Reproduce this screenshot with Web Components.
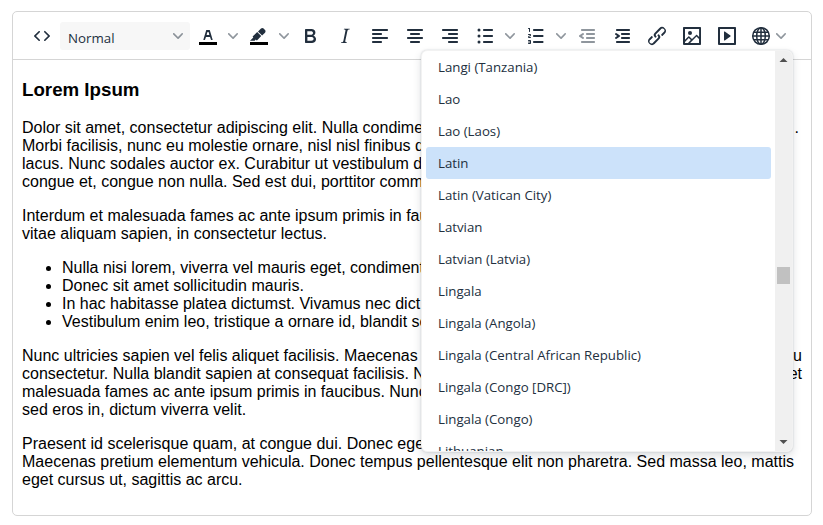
<!DOCTYPE html>
<html lang="en">
<head>
<meta charset="utf-8">
<title>Editor</title>
<style>
html, body { margin: 0; background: #fff; }
body { width: 823px; height: 525px; overflow: hidden; }
</style>
</head>
<body>
<rich-editor></rich-editor>
<script>
const line = (x, y, w) => `<rect x="${x}" y="${y}" width="${w}" height="2" rx=".8"/>`;
const ICONS = {
  code: '<path d="M9.8 15.7c.3.3.3.8 0 1-.3.4-.9.4-1.2 0l-4.4-4.1a.8.8 0 0 1 0-1.2l4.4-4.2c.3-.3.9-.3 1.2 0 .3.3.3.8 0 1.1L6 12l3.8 3.7ZM14.2 15.7c-.3.3-.3.8 0 1 .4.4.9.4 1.2 0l4.4-4.1c.3-.3.3-.9 0-1.2l-4.4-4.2a.8.8 0 0 0-1.2 0c-.3.3-.3.8 0 1.1L18 12l-3.8 3.7Z"/>',
  color: '<path fill="#000" d="M3 18h18v3H3z"/><path fill-rule="evenodd" d="M8.7 16h-.8a.5.5 0 0 1-.5-.6l2.7-9c.1-.3.3-.4.5-.4h2.8c.2 0 .4.1.5.4l2.7 9a.5.5 0 0 1-.5.6h-.8a.5.5 0 0 1-.4-.4l-.7-2.2c0-.3-.3-.4-.5-.4h-3.4c-.2 0-.4.1-.5.4l-.7 2.2c0 .3-.2.4-.4.4Zm2.6-7.6-.6 2a.5.5 0 0 0 .5.6h1.6a.5.5 0 0 0 .5-.6l-.6-2c0-.3-.3-.4-.5-.4h-.4c-.2 0-.4.1-.5.4Z"/>',
  marker: '<path fill="#000" d="M3 18h18v3H3z"/><path d="M7.7 16.7H3l3.3-3.3-.7-.8L10.2 8l4 4.1-4 4.2c-.2.2-.6.2-.8 0l-.6-.7-1.1 1.1zm5-7.5L11 7.4l3-2.9a2 2 0 0 1 2.6 0L18 6c.7.7.7 2 0 2.7l-2.9 2.9-1.8-1.8-.5-.6"/>',
  bold: '<path fill-rule="evenodd" d="M7.8 19c-.3 0-.5 0-.6-.2l-.2-.5V5.7c0-.2 0-.4.2-.5l.6-.2h5c1.5 0 2.7.3 3.5 1 .7.6 1.1 1.4 1.1 2.5a3 3 0 0 1-.6 1.9c-.4.6-1 1-1.6 1.2.4.1.9.3 1.3.6s.8.7 1 1.2c.4.4.5 1 .5 1.6 0 1.3-.4 2.3-1.3 3-.8.7-2.1 1-3.8 1H7.8Zm5-8.3c.6 0 1.2-.1 1.6-.5.4-.3.6-.7.6-1.3 0-1.1-.8-1.7-2.3-1.7H9.3v3.5h3.4Zm.5 6c.7 0 1.3-.1 1.7-.4.4-.4.6-.9.6-1.5s-.2-1-.7-1.4c-.4-.3-1-.4-2-.4H9.4v3.8h4Z"/>',
  italic: '<path d="m16.7 4.7-.1.9h-.3c-.6 0-1 0-1.4.3-.3.3-.4.6-.5 1.1l-2.1 9.8v.6c0 .5.4.8 1.4.8h.2l-.2.8H8l.2-.8h.2c1.1 0 1.8-.5 2-1.5l2-9.8.1-.5c0-.6-.4-.8-1.4-.8h-.3l.2-.9h5.8Z"/>',
  left: line(4,5,16) + line(4,9,10) + line(4,13,16) + line(4,17,10),
  center: line(4,5,16) + line(7,9,10) + line(4,13,16) + line(7,17,10),
  right: line(4,5,16) + line(10,9,10) + line(4,13,16) + line(10,17,10),
  bullets: line(10,5,10) + line(10,11,10) + line(10,17,10) + '<circle cx="6" cy="6" r="1.5"/><circle cx="6" cy="12" r="1.5"/><circle cx="6" cy="18" r="1.5"/>',
  numbers: line(9,5,10.5) + line(9,11,10.5) + line(9,17,10.5) + '<path d="M6 4v3.5c0 .3-.2.5-.5.5a.5.5 0 0 1-.5-.5V5h-.5a.5.5 0 0 1 0-1H6Zm-1 8.8.2.2h1.3c.3 0 .5.2.5.5s-.2.5-.5.5H4.9a1 1 0 0 1-.9-1V13c0-.4.3-.8.6-1l1.2-.4.2-.3a.2.2 0 0 0-.2-.2H4.5a.5.5 0 0 1-.5-.5c0-.3.2-.5.5-.5h1.6c.5 0 .9.4.9 1v.1c0 .4-.3.8-.6 1l-1.2.4-.2.3ZM7 17v2c0 .6-.4 1-1 1H4.5a.5.5 0 0 1 0-1h1.2c.2 0 .3-.1.3-.3 0-.2-.1-.3-.3-.3H4.4a.4.4 0 1 1 0-.8h1.3c.2 0 .3-.1.3-.3 0-.2-.1-.3-.3-.3H4.5a.5.5 0 1 1 0-1H6c.6 0 1 .4 1 1Z"/>',
  outdent: line(6,5,14) + line(11,9,9) + line(11,13,9) + line(6,17,14) + '<path d="M8.6 13.2a1 1 0 0 1-1.2 1.6l-3-2a1 1 0 0 1 0-1.6l3-2a1 1 0 0 1 1.2 1.6L6.8 12l1.8 1.2Z"/>',
  indent: line(6,5,14) + line(11,9,9) + line(11,13,9) + line(6,17,14) + '<path d="M5.4 13.2 7.2 12l-1.8-1.2a1 1 0 0 1 1.2-1.6l3 2a1 1 0 0 1 0 1.6l-3 2a1 1 0 1 1-1.2-1.6Z"/>',
  link: '<path d="M6.2 12.3a1 1 0 0 1 1.4 1.4l-2 2a2 2 0 1 0 2.6 2.8l4.8-4.8a1 1 0 0 0 0-1.4 1 1 0 1 1 1.4-1.3 2.9 2.9 0 0 1 0 4L9.6 20a3.9 3.9 0 0 1-5.5-5.5l2-2Zm11.6-.6a1 1 0 0 1-1.4-1.4l2-2a2 2 0 1 0-2.6-2.8L11 10.3a1 1 0 0 0 0 1.4A1 1 0 1 1 9.6 13a2.9 2.9 0 0 1 0-4L14.4 4a3.9 3.9 0 0 1 5.5 5.5l-2 2Z"/>',
  image: '<path fill-rule="evenodd" d="m5 15.7 3.3-3.2c.3-.3.7-.3 1 0L12 15l4.1-4c.3-.4.8-.4 1 0l2 1.9V5H5v10.7ZM5 18V19h3l2.8-2.9-2-2L5 17.9Zm14-3-2.5-2.4-6.4 6.5H19v-4ZM4 3h16c.6 0 1 .4 1 1v16c0 .6-.4 1-1 1H4a1 1 0 0 1-1-1V4c0-.6.4-1 1-1Z"/><circle cx="10" cy="9" r="2"/>',
  media: '<path fill-rule="evenodd" d="M4 3h16c.6 0 1 .4 1 1v16c0 .6-.4 1-1 1H4a1 1 0 0 1-1-1V4c0-.6.4-1 1-1Zm1 2v14h14V5H5Zm4.8 2.6 5.6 4a.5.5 0 0 1 0 .8l-5.6 4A.5.5 0 0 1 9 16V8a.5.5 0 0 1 .8-.4Z"/>',
  globe: '<g fill="none" stroke="currentColor" stroke-width="1.5"><circle cx="12" cy="12" r="8.3"/><ellipse cx="12" cy="12" rx="4.3" ry="8.3"/><path d="M12 4v16M4 12h16M5 8.2h14M5 15.8h14"/></g>'
};

class ToolIcon extends HTMLElement {
  connectedCallback() {
    this.attachShadow({mode: 'open'}).innerHTML = `<style>
      :host { display: flex; align-items: center; justify-content: center; width: 35px; height: 28px; flex: none; color: #222f3e; }
      :host([name=code]) { width: 34px; padding-right: 1px; }
      :host([menu]) { width: 51px; justify-content: flex-start; box-sizing: border-box; padding-left: 5.5px; }
      :host([globe]) { width: 46px; padding-left: 5px; }
      :host([globe]) .chev { margin-left: 3px; }
      :host([disabled]) .main { opacity: .5; }
      svg { display: block; fill: currentColor; flex: none; }
      .chev { margin-left: 8px; opacity: .5; }
    </style><svg class="main" width="24" height="24" viewBox="0 0 24 24">${ICONS[this.getAttribute('name')]}</svg>${
      this.hasAttribute('menu') ? '<svg class="chev" width="10" height="10" viewBox="0 0 10 10"><path d="M8.7 2.2c.3-.3.8-.3 1 0 .4.4.4.9 0 1.2L5.7 7.8c-.3.3-.9.3-1.2 0L.2 3.4a.8.8 0 0 1 0-1.2c.3-.3.8-.3 1.1 0L5 6l3.7-3.8Z"/></svg>' : ''}`;
  }
}
customElements.define('tool-icon', ToolIcon);

class FormatSelect extends HTMLElement {
  connectedCallback() {
    this.attachShadow({mode: 'open'}).innerHTML = `<style>
      :host { display: flex; align-items: center; justify-content: space-between; box-sizing: border-box; width: 130px; height: 28px; padding: 3px 7px 0 8px; background: #f7f7f7; border-radius: 3px; color: #222f3e; font: 13.3px/24px "Open Sans", sans-serif; flex: none; }
      svg { fill: currentColor; opacity: .5; margin-top: -3px; }
    </style><slot></slot><svg width="10" height="10" viewBox="0 0 10 10"><path d="M8.7 2.2c.3-.3.8-.3 1 0 .4.4.4.9 0 1.2L5.7 7.8c-.3.3-.9.3-1.2 0L.2 3.4a.8.8 0 0 1 0-1.2c.3-.3.8-.3 1.1 0L5 6l3.7-3.8Z"/></svg>`;
  }
}
customElements.define('format-select', FormatSelect);

class EditorToolbar extends HTMLElement {
  connectedCallback() {
    this.attachShadow({mode: 'open'}).innerHTML = `<style>
      :host { display: flex; align-items: center; height: 47px; padding-left: 12px; border-bottom: 1px solid #d5d5d5; }
      .bar { display: flex; align-items: center; height: 28px; padding-top: 1px; }
    </style><div class="bar">
      <tool-icon name="code"></tool-icon><format-select>Normal</format-select>
      <tool-icon name="color" menu></tool-icon><tool-icon name="marker" menu></tool-icon>
      <tool-icon name="bold"></tool-icon><tool-icon name="italic"></tool-icon>
      <tool-icon name="left"></tool-icon><tool-icon name="center"></tool-icon><tool-icon name="right"></tool-icon>
      <tool-icon name="bullets" menu></tool-icon><tool-icon name="numbers" menu></tool-icon>
      <tool-icon name="outdent" disabled></tool-icon><tool-icon name="indent"></tool-icon>
      <tool-icon name="link"></tool-icon><tool-icon name="image"></tool-icon><tool-icon name="media"></tool-icon>
      <tool-icon name="globe" menu globe></tool-icon></div>`;
  }
}
customElements.define('editor-toolbar', EditorToolbar);

class EditorContent extends HTMLElement {
  connectedCallback() {
    this.attachShadow({mode: 'open'}).innerHTML = `<style>
      :host { display: block; padding: 19px 9px 0; font: 16px/18px "Liberation Sans", Arial, sans-serif; color: #000; white-space: nowrap; }
      h3 { font-size: 18.72px; line-height: 22px; margin: 0 0 18px; }
      p, ul { margin: 0 0 16px; }
      ul { padding-left: 40px; }
      .row { display: flex; justify-content: space-between; }
      .a { padding-right: 3px; }
    </style>
    <h3>Lorem Ipsum</h3>
    <p><span class="row a"><span>Dolor sit amet, consectetur adipiscing elit. Nulla condime</span><span>.</span></span>
    Morbi facilisis, nunc eu molestie ornare, nisl nisl finibus d<br>lacus. Nunc sodales auctor ex. Curabitur ut vestibulum d<br>congue et, congue non nulla. Sed est dui, porttitor comm</p>
    <p>Interdum et malesuada fames ac ante ipsum primis in fau<br>vitae aliquam sapien, in consectetur lectus.</p>
    <ul><li>Nulla nisi lorem, viverra vel mauris eget, condiment</li><li>Donec sit amet sollicitudin mauris.</li><li>In hac habitasse platea dictumst. Vivamus nec dict</li><li>Vestibulum enim leo, tristique a ornare id, blandit se</li></ul>
    <p><span class="row"><span>Nunc ultricies sapien vel felis aliquet facilisis. Maecenas</span><span>u</span></span>
    <span class="row"><span>consectetur. Nulla blandit sapien at consequat facilisis. N</span><span>et</span></span>
    malesuada fames ac ante ipsum primis in faucibus. Nunc<br>sed eros in, dictum viverra velit.</p>
    <p>Praesent id scelerisque quam, at congue dui. Donec ege<br>Maecenas pretium elementum vehicula. Donec tempus pellentesque elit non pharetra. Sed massa leo, mattis<br>eget cursus ut, sagittis ac arcu.</p>`;
  }
}
customElements.define('editor-content', EditorContent);

class LangItem extends HTMLElement {
  connectedCallback() {
    this.attachShadow({mode: 'open'}).innerHTML = `<style>
      :host { display: flex; align-items: center; height: 32px; padding-left: 12px; box-sizing: border-box; border-radius: 3px; flex: none; }
      :host([active]) { background: #cce2fa; }
    </style><slot></slot>`;
  }
}
customElements.define('lang-item', LangItem);

class LangMenu extends HTMLElement {
  connectedCallback() {
    const names = ['Langi (Tanzania)', 'Lao', 'Lao (Laos)', 'Latin', 'Latin (Vatican City)', 'Latvian', 'Latvian (Latvia)', 'Lingala', 'Lingala (Angola)', 'Lingala (Central African Republic)', 'Lingala (Congo [DRC])', 'Lingala (Congo)', 'Lithuanian'];
    this.attachShadow({mode: 'open'}).innerHTML = `<style>
      :host { position: absolute; left: 421px; top: 50px; width: 372px; height: 402px; box-sizing: border-box; display: flex; background: #fff; border: 1px solid #f2f2f2; border-radius: 6px; box-shadow: 0 0 2px rgba(34,47,62,.2), 0 4px 8px rgba(34,47,62,.15); overflow: hidden; font: 13.25px/20px "Open Sans", sans-serif; color: #222f3e; white-space: nowrap; }
      .list { display: flex; flex-direction: column; width: 345px; padding: 0 4px; height: 400px; overflow: hidden; }
      .track { width: 17px; height: 400px; background: #f0f0f0; display: flex; flex-direction: column; align-items: center; flex: none; }
      .thumb { width: 13px; height: 17px; background: #c1c1c1; margin-top: 199px; }
      svg { display: block; fill: #505050; width: 17px; height: 17px; }
      .down { margin-top: auto; }
    </style><div class="list">${names.map(n => `<lang-item${n === 'Latin' ? ' active' : ''}>${n}</lang-item>`).join('')}</div>
    <div class="track"><svg viewBox="0 0 17 17"><path d="M4.5 11l4-4 4 4z"/></svg><div class="thumb"></div><svg class="down" viewBox="0 0 17 17"><path d="M4.5 6h8l-4 4z"/></svg></div>`;
  }
}
customElements.define('lang-menu', LangMenu);

class RichEditor extends HTMLElement {
  connectedCallback() {
    this.attachShadow({mode: 'open'}).innerHTML = `<style>
      :host { display: block; padding: 11px 11px 9px 12px; box-sizing: border-box; height: 525px; }
      .frame { box-sizing: border-box; height: 505px; border: 1px solid #d5d5d5; border-radius: 5px; overflow: hidden; }
    </style><div class="frame"><editor-toolbar></editor-toolbar><editor-content></editor-content></div><lang-menu></lang-menu>`;
  }
}
customElements.define('rich-editor', RichEditor);
</script>
</body>
</html>
